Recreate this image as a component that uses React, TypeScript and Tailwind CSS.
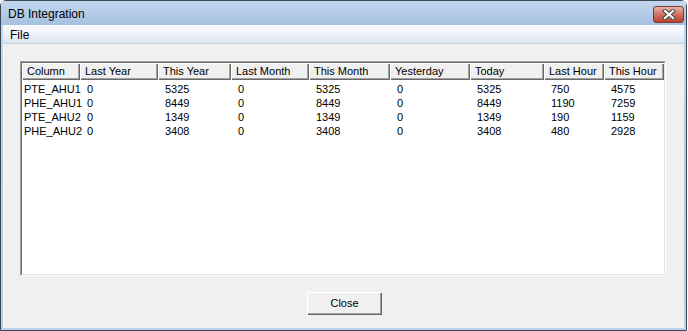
import React from "react";

const cols = [
  { name: "Column", w: 58 },
  { name: "Last Year", w: 78 },
  { name: "This Year", w: 73 },
  { name: "Last Month", w: 78 },
  { name: "This Month", w: 81 },
  { name: "Yesterday", w: 80 },
  { name: "Today", w: 74 },
  { name: "Last Hour", w: 60 },
  { name: "This Hour", w: 60 },
];

const rows = [
  ["PTE_AHU1", "0", "5325", "0", "5325", "0", "5325", "750", "4575"],
  ["PHE_AHU1", "0", "8449", "0", "8449", "0", "8449", "1190", "7259"],
  ["PTE_AHU2", "0", "1349", "0", "1349", "0", "1349", "190", "1159"],
  ["PHE_AHU2", "0", "3408", "0", "3408", "0", "3408", "480", "2928"],
];

export default function App() {
  return (
    <div className="w-[688px] h-[331px] bg-white overflow-hidden" style={{ fontFamily: '"Liberation Sans", Arial, sans-serif' }}>
      <div className="w-[687px] h-[331px] flex flex-col border border-[#3c4756] rounded-t-[6px] bg-gradient-to-b from-[#c6d9ef] via-[#b3cbe6] to-[#b9d1ea]">
        {/* Title bar */}
        <div className="h-[24px] flex items-center justify-between pl-[7px] pr-[2px] shrink-0 bg-gradient-to-b from-[#c4d8ef] to-[#a6c1e1]">
          <span className="text-[12px] text-black leading-none mt-[1px]">DB Integration</span>
          <div className="w-[31px] h-[17px] mt-[2px] rounded-[3px] border border-[#7a3a30] bg-gradient-to-b from-[#eab4a8] via-[#d3705f] to-[#bd3f30] flex items-center justify-center">
            <svg width="14" height="11" viewBox="0 0 14 11">
              <path d="M3 2 L11 9 M11 2 L3 9" stroke="#4b4b4b" strokeWidth="4.2" strokeLinecap="square" />
              <path d="M3 2 L11 9 M11 2 L3 9" stroke="#ffffff" strokeWidth="2.2" strokeLinecap="square" />
            </svg>
          </div>
        </div>
        {/* Inner frame */}
        <div className="flex-1 flex flex-col mx-[2px] mb-[2px] min-h-0">
          {/* Menu bar */}
          <div className="h-[19px] shrink-0 flex items-center px-[7px] bg-gradient-to-b from-[#f8fafd] via-[#eef2f9] to-[#dce4f0] border-b border-[#c9d2df]">
            <span className="text-[12px] text-black leading-none mt-[2px]">File</span>
          </div>
          {/* Client area */}
          <div className="flex-1 flex flex-col bg-[#f0f0f0] border-l border-[#f7f7f7] min-h-0">
            <div className="ml-[16px] mr-[18px] mt-[17px] h-[215px] border border-t-[#a0a0a0] border-l-[#a0a0a0] border-b-[#ffffff] border-r-[#ffffff]">
              <div className="w-full h-full border border-t-[#696969] border-l-[#696969] border-b-[#e3e3e3] border-r-[#e3e3e3] bg-white flex flex-col text-[11px] text-black">
                <div className="flex h-[17px] shrink-0">
                  {cols.map((c) => (
                    <div
                      key={c.name}
                      className="h-[17px] flex items-center pl-[5px] bg-[#f0f0f0] shadow-[inset_1px_1px_0_#ffffff,inset_-1px_-1px_0_#696969,inset_-2px_-2px_0_#a0a0a0] leading-none"
                      style={{ width: c.w }}
                    >
                      {c.name}
                    </div>
                  ))}
                </div>
                <div className="flex flex-col pt-[2px]">
                  {rows.map((r, i) => (
                    <div key={i} className="flex h-[14px] leading-[14px]">
                      {r.map((v, j) => (
                        <div
                          key={j}
                          className={j === 0 ? "pl-[2px] whitespace-nowrap" : "pl-[7px] whitespace-nowrap"}
                          style={{ width: cols[j].w }}
                        >
                          {v}
                        </div>
                      ))}
                    </div>
                  ))}
                </div>
              </div>
            </div>
            <div className="flex justify-center mt-[16px]">
              <button className="w-[75px] h-[23px] ml-[1px] bg-[#f0f0f0] text-[11px] text-black leading-none shadow-[inset_1px_1px_0_#ffffff,inset_-1px_-1px_0_#696969,inset_-2px_-2px_0_#a0a0a0]">
                Close
              </button>
            </div>
          </div>
        </div>
      </div>
    </div>
  );
}
